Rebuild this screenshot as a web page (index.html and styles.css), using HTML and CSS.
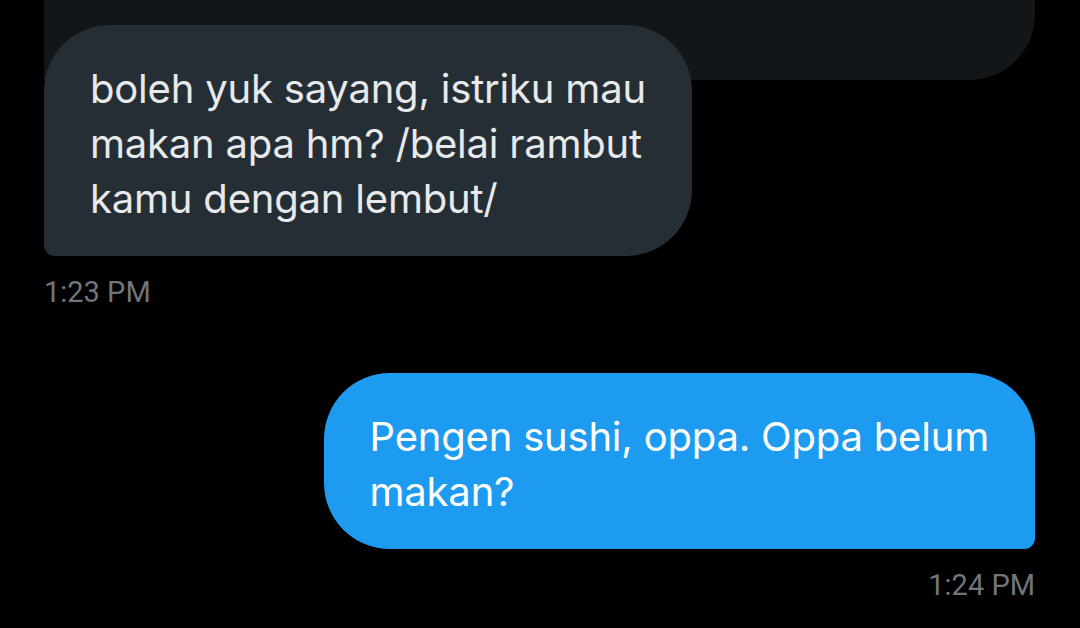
FILE: index.html
```html
<!DOCTYPE html>
<html lang="id">
<head>
<meta charset="utf-8">
<title>Pesan</title>
<link rel="stylesheet" href="styles.css">
</head>
<body>
<main class="chat">
  <div class="quote"></div>
  <div class="msg received">boleh yuk sayang, istriku mau<br>makan apa hm? /belai rambut<br>kamu dengan lembut/</div>
  <div class="time">1:23 PM</div>
  <div class="msg sent">Pengen sushi, oppa. Oppa belum<br>makan?</div>
  <div class="time right">1:24 PM</div>
</main>
</body>
</html>
```
FILE: styles.css
```css
html, body {
  margin: 0;
  padding: 0;
  background: #000;
  height: 100%;
  overflow: hidden;
}

.chat {
  display: flex;
  flex-direction: column;
  align-items: flex-start;
  padding: 0 45px 0 44px;
}

.quote {
  align-self: stretch;
  height: 80px;
  background: #121619;
  border-radius: 0 0 66px 0;
}

.msg {
  font-family: "Inter", "Noto Sans", sans-serif;
  font-size: 40px;
  line-height: 55px;
  letter-spacing: -0.2px;
  white-space: nowrap;
  padding: 36px 46px 30px 46px;
  border-radius: 66px;
  position: relative;
}

.received {
  margin-top: -55px;
  background: #252e35;
  color: #e7e9ea;
  border-bottom-left-radius: 11px;
}

.sent {
  margin-top: 64px;
  align-self: flex-end;
  background: #1d9bf0;
  color: #ffffff;
  border-bottom-right-radius: 11px;
}

.time {
  font-family: "Roboto", "Liberation Sans", sans-serif;
  font-size: 29px;
  line-height: 34px;
  color: #71767b;
  margin-top: 19px;
}

.time.right {
  align-self: flex-end;
}
```
